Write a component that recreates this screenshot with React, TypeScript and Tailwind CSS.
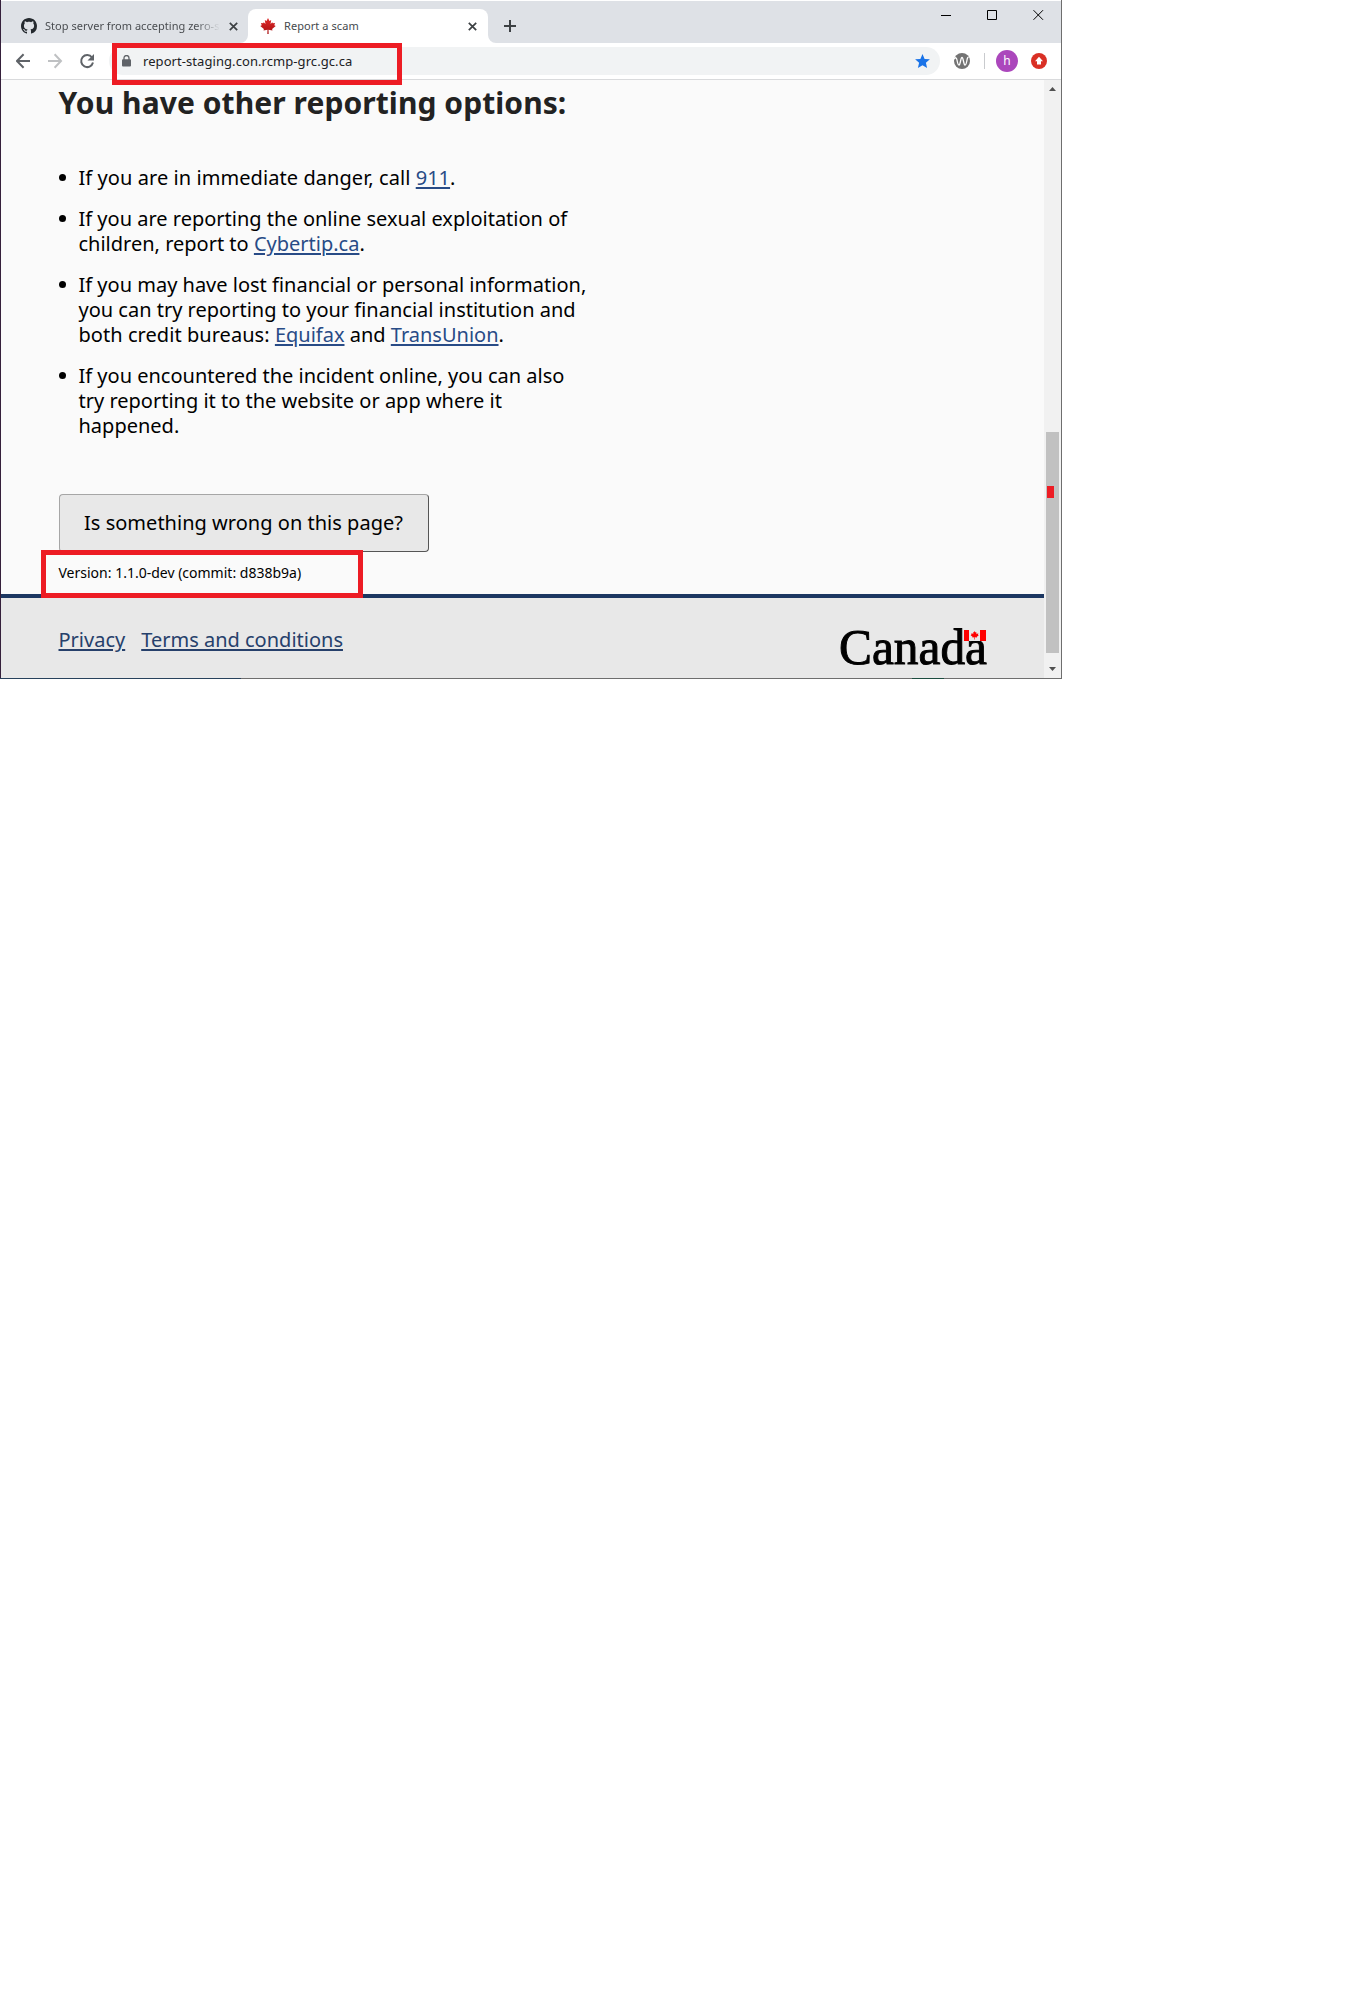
import type { ReactNode } from "react";

const maple =
  "M12 0 L14.2 4.4 L16.8 3.1 L15.8 9 L18.4 6.4 L19.2 8 L22.6 7.4 L21.4 10.8 L23.6 12 L18.2 16.4 L18.7 18.6 L12.8 17.8 L13 24 H11 L11.2 17.8 L5.3 18.6 L5.8 16.4 L.4 12 L2.6 10.8 L1.4 7.4 L4.8 8 L5.6 6.4 L8.2 9 L7.2 3.1 L9.8 4.4 Z";

function Close({ className }: { className: string }) {
  return (
    <svg className={className} width="9" height="9" viewBox="0 0 9 9" stroke="#3c4043" strokeWidth="1.7">
      <path d="M.8 .8 8.2 8.2M8.2 .8 .8 8.2" />
    </svg>
  );
}

function TabStrip() {
  return (
    <div className="flex h-[42px] bg-[#dee1e6] pt-2">
      <div className="flex h-[34px] w-[247px] items-center pl-5">
        <svg width="16" height="16" viewBox="0 0 16 16" fill="#24292e">
          <path d="M8 0C3.58 0 0 3.58 0 8c0 3.54 2.29 6.53 5.47 7.59.4.07.55-.17.55-.38 0-.19-.01-.82-.01-1.49-2.01.37-2.53-.49-2.69-.94-.09-.23-.48-.94-.82-1.13-.28-.15-.68-.52-.01-.53.63-.01 1.08.58 1.23.82.72 1.21 1.87.87 2.33.66.07-.52.28-.87.51-1.07-1.78-.2-3.64-.89-3.64-3.95 0-.87.31-1.59.82-2.15-.08-.2-.36-1.02.08-2.12 0 0 .67-.21 2.2.82.64-.18 1.32-.27 2-.27s1.36.09 2 .27c1.53-1.04 2.2-.82 2.2-.82.44 1.1.16 1.92.08 2.12.51.56.82 1.27.82 2.15 0 3.07-1.87 3.75-3.65 3.95.29.25.54.73.54 1.48 0 1.07-.01 1.93-.01 2.2 0 .21.15.46.55.38A8.01 8.01 0 0 0 16 8c0-4.42-3.58-8-8-8" />
        </svg>
        <span className="ml-2 w-[175px] whitespace-nowrap text-[11px] tracking-[0.03px] text-[#4a4d51] [mask-image:linear-gradient(to_right,black_86%,transparent)]">
          Stop server from accepting zero-s
        </span>
        <Close className="ml-[9px]" />
      </div>
      <div className="relative flex h-[34px] w-60 items-center rounded-t-lg bg-white pl-3">
        <svg className="absolute bottom-0 -left-2" width="8" height="8" viewBox="0 0 8 8" fill="#fff">
          <path d="M8 0v8H0A8 8 0 0 0 8 0" />
        </svg>
        <svg className="absolute -right-2 bottom-0" width="8" height="8" viewBox="0 0 8 8" fill="#fff">
          <path d="M0 0v8h8A8 8 0 0 1 0 0" />
        </svg>
        <svg width="16" height="16" viewBox="0 0 24 24">
          <defs>
            <linearGradient id="leaf" x1="0" y1="0" x2="0" y2="1">
              <stop offset="0" stopColor="#e02a2a" />
              <stop offset="1" stopColor="#a80f10" />
            </linearGradient>
          </defs>
          <path d={maple} fill="url(#leaf)" />
        </svg>
        <span className="ml-2 flex-1 text-[11px] tracking-[0.07px] text-[#45494d]">Report a scam</span>
        <Close className="mr-[11.500px]" />
      </div>
      <svg className="mt-[11px] ml-4" width="12" height="12" viewBox="0 0 12 12" stroke="#3c4043" strokeWidth="2">
        <path d="M6 0v12M0 6h12" />
      </svg>
      <svg className="mr-[17px] ml-auto" width="103" height="12" viewBox="0 0 103 12" fill="none" stroke="#000">
        <path d="M0 6.500h10M46.500 1.500h9v9h-9zM92.500 1.200l9.500 9.600M102 1.200l-9.500 9.600" />
      </svg>
    </div>
  );
}

function Toolbar() {
  return (
    <div className="flex h-[37px] items-center border-b border-[#d9dadc] bg-white pl-[15px]">
      <svg width="79" height="16" viewBox="0 0 79 16" fill="none" strokeWidth="2">
        <path stroke="#5f6368" d="M14 8H1.500M7.600 1.300 1 8l6.600 6.700" />
        <path stroke="#bfc1c3" d="M32 8h12.500M38.600 1.300 45 8l-6.400 6.700" />
        <path stroke="#5f6368" d="M76 4.500A6 6 0 1 0 77 9.600" />
        <path fill="#5f6368" d="M78 1v6.500h-6.500z" />
      </svg>
      <div className="ml-[14px] flex h-7 w-[831px] items-center rounded-full bg-[#f1f3f4] pl-[13px]">
        <svg width="9" height="12" viewBox="0 0 9 12">
          <rect y="4.200" width="9" height="7.300" rx="1" fill="#5f6368" />
          <path d="M2 5V3a2.500 2.500 0 0 1 5 0v2" fill="none" stroke="#5f6368" strokeWidth="1.300" />
        </svg>
        <span className="mt-px ml-3 flex-1 text-[13px] tracking-[0.07px] text-[#202124]">report-staging.con.rcmp-grc.gc.ca</span>
        <svg className="mr-2.5" width="15" height="14" viewBox="0 0 15 14" fill="#1a73e8">
          <path d="M7.500 0l2.100 4.900 5.300.4-4 3.500 1.200 5.200-4.600-2.800L2.900 14l1.200-5.200-4-3.500 5.300-.4z" />
        </svg>
      </div>
      <svg className="ml-3.5" width="16" height="16" viewBox="0 0 16 16">
        <circle cx="8" cy="8" r="8" fill="#737373" />
        <path d="M0 6C1.500 4 2.600 4.500 3 7c.4 2.500.8 5 2 5 1.500 0 1.500-7.500 3-7.500S9.500 12 11 12c1.200 0 1.600-2.500 2-5 .3-2 .8-3 1.600-2.500" fill="none" stroke="#fff" strokeWidth="1.300" />
      </svg>
      <div className="ml-3.5 h-4 w-px bg-[#c9cbce]" />
      <div className="ml-[11px] flex size-[22px] items-center justify-center rounded-full bg-[#ab47bc] text-[12px] leading-none text-white">h</div>
      <svg className="ml-[13px]" width="16" height="16" viewBox="0 0 16 16">
        <circle cx="8" cy="8" r="8" fill="#d93025" />
        <path d="M8 3.800 12 8.200H10v3.300H6V8.200H4z" fill="#fff" />
      </svg>
    </div>
  );
}

function Link({ children }: { children: ReactNode }) {
  return (
    <a className="text-[#284b86] underline decoration-2 underline-offset-2">{children}</a>
  );
}

function Item({ children }: { children: ReactNode }) {
  return (
    <li className="flex">
      <span className="mt-[9px] mr-[13px] size-[7px] shrink-0 rounded-full bg-black" />
      <p className="whitespace-nowrap">{children}</p>
    </li>
  );
}

function Page() {
  return (
    <div className="flex w-[1043px] flex-col bg-[#fafafa]">
      <div className="relative flex h-[514px] flex-col items-start pl-[57.500px]">
        <h1 className="mt-[4px] text-[30px] leading-[38px] font-bold tracking-[0.07px] whitespace-nowrap text-[#222]">
          You have other reporting options:
        </h1>
        <ul className="mt-[43px] flex flex-col gap-4 text-[20px] leading-[25px] text-black">
          <Item>
            <span className="tracking-[0.07px]">If you are in immediate danger, call </span>
            <Link>911</Link>.
          </Item>
          <Item>
            If you are reporting the online sexual exploitation of
            <br />
            children, report to <Link>Cybertip.ca</Link>.
          </Item>
          <Item>
            If you may have lost financial or personal information,
            <br />
            you can try reporting to your financial institution and
            <br />
            <span className="tracking-[0.05px]">both credit bureaus: </span>
            <Link>Equifax</Link> and <Link>TransUnion</Link>.
          </Item>
          <Item>
            If you encountered the incident online, you can also
            <br />
            try reporting it to the website or app where it
            <br />
            happened.
          </Item>
        </ul>
        <button className="mt-[56px] ml-[0.500px] flex h-[58px] w-[370px] shrink-0 items-center justify-center rounded border border-t-[#a6a6a6] border-r-[#555] border-b-[#555] border-l-[#a6a6a6] bg-[#e8e8e8] pr-px text-[20px] tracking-[0.02px] whitespace-nowrap text-black">
          Is something wrong on this page?
        </button>
        <p className="mt-[12px] text-[14px] leading-[18px] whitespace-nowrap text-black">Version: 1.1.0-dev (commit: d838b9a)</p>
        <div className="absolute top-[470px] left-10 z-10 h-[48px] w-[322px] border-5 border-[#ed1c24]" />
      </div>
      <footer className="flex h-[84px] border-t-4 border-[#1c3761] bg-[#e8e8e8] pl-[57.500px]">
        <nav className="mt-[29px] flex gap-4 text-[20px] leading-[25px] whitespace-nowrap">
          <a className="text-[#26406b] underline decoration-2 underline-offset-2">Privacy</a>
          <a className="text-[#26406b] underline decoration-2 underline-offset-2">Terms and conditions</a>
        </nav>
        <svg className="mt-[25px] mr-[53px] ml-auto overflow-visible" width="153" height="60" viewBox="-2 0 153 60">
          <text x="-1" y="41" fontSize="51" textLength="148" lengthAdjust="spacingAndGlyphs" stroke="#000" strokeWidth="1" className="font-['Liberation_Serif',serif]">
            Canada
          </text>
          <path fill="#e8e8e8" d="M123 5h24v13h-24z" />
          <path fill="#f00" d="M124 7h5v11h-5zM140 7h6v11h-6z" />
          <path d={maple} fill="#f00" transform="translate(130.500 8) scale(.35)" />
        </svg>
      </footer>
    </div>
  );
}

function Scrollbar() {
  return (
    <div className="flex w-[17px] flex-col bg-[#f1f1f1]">
      <svg className="mt-[7px] ml-[5px]" width="7" height="4" viewBox="0 0 7 4" fill="#505050">
        <path d="M0 4 3.500 0 7 4z" />
      </svg>
      <div className="mt-[341px] ml-[2px] h-[221px] w-[13px] bg-[#c1c1c1] pt-[54px] pl-px">
        <div className="h-3 w-[7px] bg-[#ed1c24]" />
      </div>
      <svg className="mt-[14px] ml-[5px]" width="7" height="4" viewBox="0 0 7 4" fill="#505050">
        <path d="M0 0h7L3.500 4z" />
      </svg>
    </div>
  );
}

export default function App() {
  return (
    <main className="min-h-[2000px] bg-white font-['Noto_Sans',sans-serif]">
      <div className="relative w-[1062px] border-r border-b border-l border-r-[#6e6e6e] border-b-[#6e6e6e] border-l-[#35203b] pt-px">
        <TabStrip />
        <Toolbar />
        <div className="flex h-[598px]">
          <Page />
          <Scrollbar />
        </div>
        <div className="absolute top-[43px] left-[111px] h-[42px] w-[290px] border-5 border-[#ed1c24]" />
        <div className="absolute -bottom-px -left-px h-px w-[241px] bg-[#28425c]" />
        <div className="absolute right-[117px] -bottom-px h-px w-8 bg-[#1d4d40]" />
      </div>
    </main>
  );
}
